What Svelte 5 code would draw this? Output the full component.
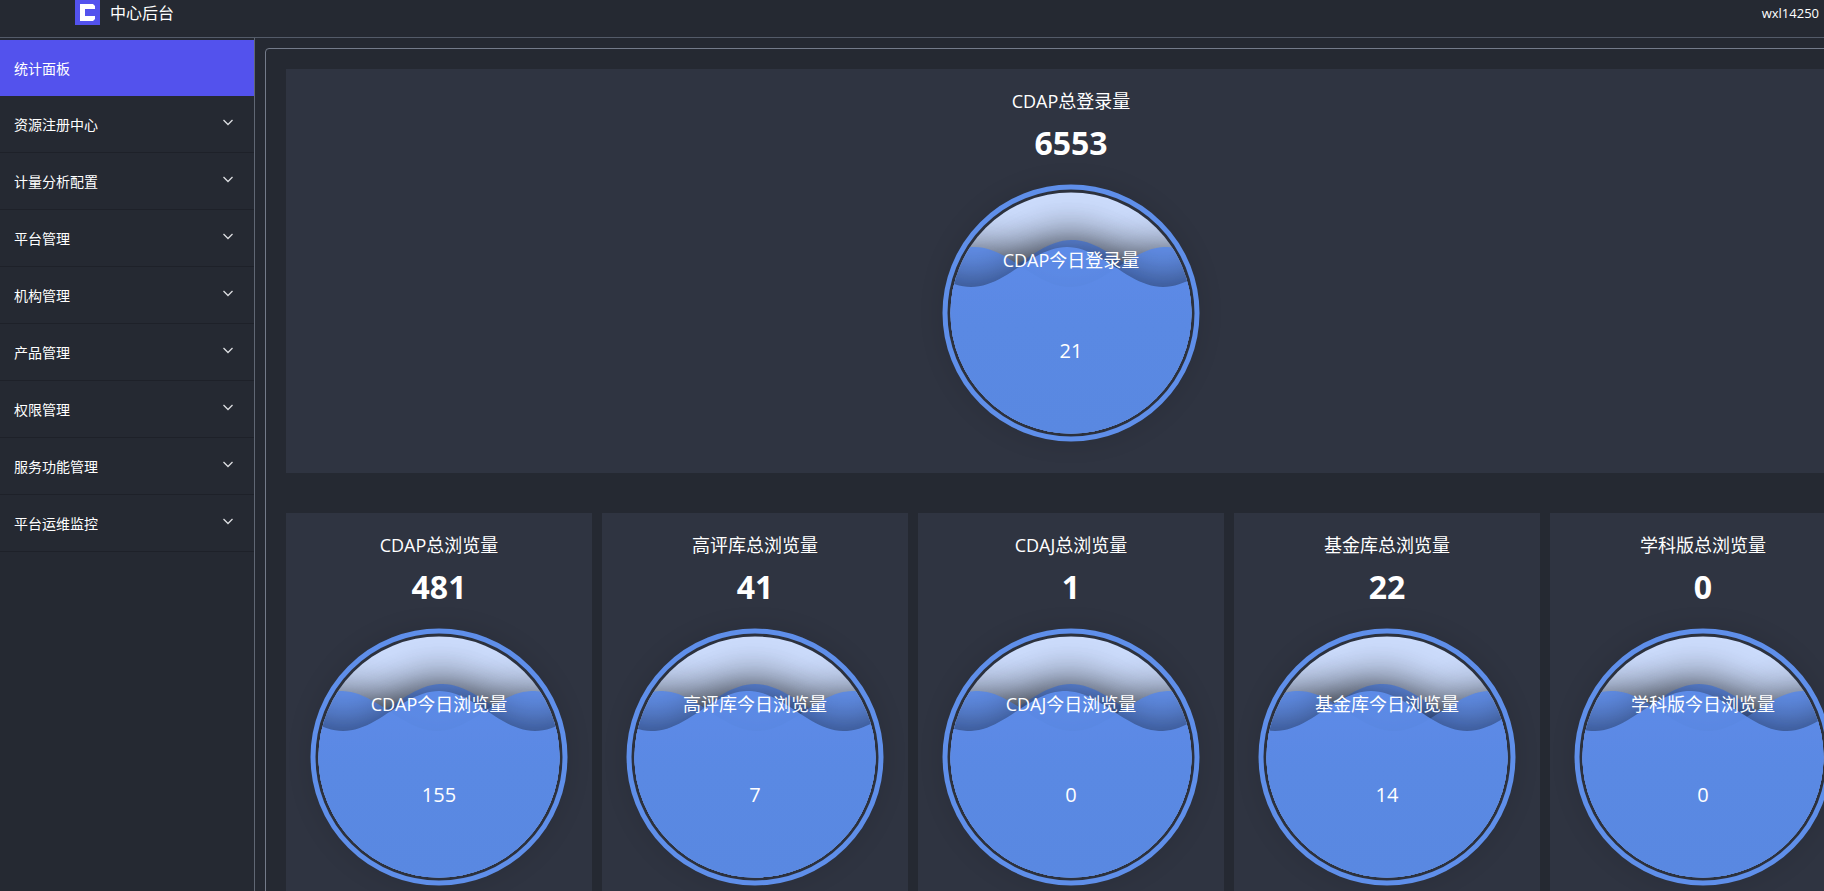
<script>
	const menu = [
		{ name: '统计面板', link: true },
		{ name: '资源注册中心' },
		{ name: '计量分析配置' },
		{ name: '平台管理' },
		{ name: '机构管理' },
		{ name: '产品管理' },
		{ name: '权限管理' },
		{ name: '服务功能管理' },
		{ name: '平台运维监控' }
	];

	// phases: horizontal shift of the back, middle and front wave
	const login = { title: 'CDAP总登录量', total: 6553, label: 'CDAP今日登录量', today: 21, phases: [1, -97, -4] };
	const views = [
		{ title: 'CDAP总浏览量', total: 481, label: 'CDAP今日浏览量', today: 155, phases: [3, -98, 0] },
		{ title: '高评库总浏览量', total: 41, label: '高评库今日浏览量', today: 7, phases: [0, -94, -7] },
		{ title: 'CDAJ总浏览量', total: 1, label: 'CDAJ今日浏览量', today: 0, phases: [0, -94, -6] },
		{ title: '基金库总浏览量', total: 22, label: '基金库今日浏览量', today: 14, phases: [-5, -89, -16] },
		{ title: '学科版总浏览量', total: 0, label: '学科版今日浏览量', today: 0, phases: [-4, -91, -13] }
	];

	const waveLength = 192;
	const levels = [-53, -46, -46];
	let active = 0;

	function wave(mid, phase) {
		let d = '';
		for (let x = -192; x <= 192; x += 4) {
			const y = mid - 20 * Math.cos(((x - phase) / waveLength) * Math.PI * 2);
			d += `${d ? 'L' : 'M'}${x} ${y.toFixed(2)}`;
		}
		return d + 'L192 121L-192 121Z';
	}
</script>

{#snippet card(item)}
	<section class="card">
		<h2>{item.title}</h2>
		<strong>{item.total}</strong>
		<svg class="gauge" viewBox="-153 -160 306 320" role="img" aria-label="{item.label} {item.today}">
			<defs>
				<clipPath id="liquid"><circle r="120.5" /></clipPath>
				<linearGradient id="water" gradientUnits="userSpaceOnUse" x1="0" y1="-60" x2="0" y2="121">
					<stop offset="0" stop-color="#5d8ce8" />
					<stop offset="0.4" stop-color="#5b89e3" />
					<stop offset="1" stop-color="#5a88e1" />
				</linearGradient>
				<filter id="waveShadow" filterUnits="userSpaceOnUse" x="-280" y="-200" width="560" height="420" color-interpolation-filters="sRGB">
					<feDropShadow dx="0" dy="0" stdDeviation="23" flood-color="#000" flood-opacity="0.58" />
				</filter>
				<filter id="ringShadow" filterUnits="userSpaceOnUse" x="-180" y="-180" width="360" height="360" color-interpolation-filters="sRGB">
					<feDropShadow dx="0" dy="0" stdDeviation="10" flood-color="#000" flood-opacity="0.25" />
				</filter>
			</defs>
			<circle class="ring" r="126" filter="url(#ringShadow)" />
			<circle class="backdrop" r="120.5" />
			<g clip-path="url(#liquid)">
				{#each levels as mid, i}
					<path d={wave(mid, item.phases[i])} fill="url(#water)" opacity="0.95" filter="url(#waveShadow)" />
				{/each}
			</g>
			<text class="label" y="-46">{item.label}</text>
			<text class="today" y="45">{item.today}</text>
		</svg>
	</section>
{/snippet}

<div class="app">
	<header>
		<div class="brand">
			<svg viewBox="0 0 25 25" width="25" height="25" aria-hidden="true">
				<path fill="#5352ed" d="M0 0H25V25H0Z" />
				<path fill="#fff" d="M5 4H18L20 6V9H10V16H20V19L18 21H5Z" />
			</svg>
			<h1>中心后台</h1>
		</div>
		<span class="user">wxl14250</span>
	</header>

	<div class="body">
		<nav>
			{#each menu as item, i}
				<button class="item" class:active={active === i} on:click={() => (active = i)}>
					{item.name}
					{#if !item.link}
						<svg viewBox="0 0 12 12" width="12" height="12" aria-hidden="true">
							<path d="M1.5 4L6 8.5L10.5 4" />
						</svg>
					{/if}
				</button>
			{/each}
		</nav>

		<main>
			<div class="panel">
				{@render card(login)}
				<div class="row">
					{#each views as item}
						{@render card(item)}
					{/each}
				</div>
			</div>
		</main>
	</div>
</div>

<style>
	:global(body) {
		background: #252932;
	}
	.app {
		display: flex;
		flex-direction: column;
		height: 100vh;
		overflow: hidden;
		color: #fff;
		font-family: 'Open Sans', 'Noto Sans CJK SC', sans-serif;
		font-size: 14px;
	}
	header {
		display: flex;
		justify-content: space-between;
		align-items: flex-start;
		height: 37px;
		padding: 0 5px 0 75px;
		border-bottom: 1px solid #545b69;
	}
	.brand {
		display: flex;
		gap: 10px;
	}
	.brand svg {
		display: block;
	}
	h1 {
		margin: 0;
		font-size: 16px;
		font-weight: 400;
		line-height: 26px;
	}
	.user {
		font-size: 13px;
		line-height: 26px;
	}

	.body {
		display: flex;
		flex: 1;
		min-height: 0;
	}
	nav {
		flex: none;
		box-sizing: border-box;
		width: 255px;
		padding-top: 2px;
		border-right: 1px solid #606774;
	}
	.item {
		display: flex;
		justify-content: space-between;
		align-items: center;
		box-sizing: border-box;
		width: 100%;
		height: 57px;
		padding: 0 20px 0 14px;
		border: none;
		border-bottom: 1px solid #1e2129;
		background: none;
		color: inherit;
		font: inherit;
		text-align: left;
		cursor: pointer;
	}
	.item.active {
		height: 56px;
		border-bottom: none;
		background: #5352ed;
	}
	.item svg {
		margin-bottom: 4px;
	}
	.item path {
		fill: none;
		stroke: #dcdde0;
		stroke-width: 1.3;
	}

	main {
		flex: 1;
		min-width: 0;
		padding: 10px 0 0 10px;
	}
	.panel {
		box-sizing: border-box;
		width: max-content;
		min-width: 100%;
		padding: 20px;
		border: 1px solid #747b8a;
		border-radius: 4px;
	}
	.row {
		display: grid;
		grid-template-columns: repeat(5, minmax(306px, 1fr));
		gap: 10px;
		margin-top: 40px;
	}
	.card {
		display: flex;
		flex-direction: column;
		align-items: center;
		padding-top: 16px;
		background: #2f3441;
	}
	h2 {
		margin: 0;
		font-size: 18px;
		font-weight: 400;
		line-height: 32px;
	}
	strong {
		font-size: 32px;
		font-weight: 700;
		line-height: 36px;
		margin-top: 8px;
		margin-bottom: -8px;
	}
	.gauge {
		display: block;
		width: 306px;
		height: 320px;
	}
	.ring {
		fill: none;
		stroke: #5f8fea;
		stroke-width: 5;
	}
	.backdrop {
		fill: #cbdbfb;
	}
	.gauge text {
		fill: #fff;
		text-anchor: middle;
	}
	.label {
		font-size: 18px;
	}
	.today {
		font-size: 20px;
		font-weight: 500;
	}
</style>
